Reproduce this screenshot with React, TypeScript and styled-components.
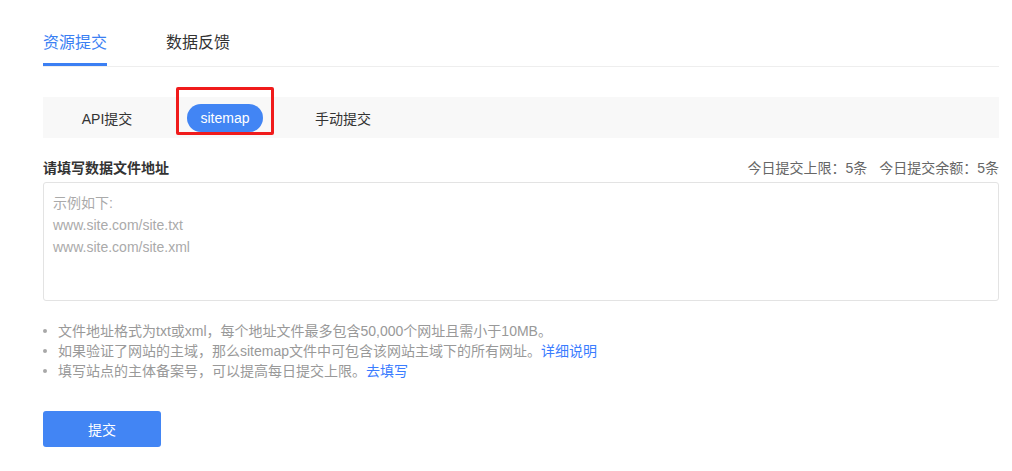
import React, { useState } from "react";
import styled, { createGlobalStyle } from "styled-components";

const GlobalStyle = createGlobalStyle`
  html, body {
    margin: 0;
    padding: 0;
    background: #fff;
    font-family: "Liberation Sans", "Noto Sans CJK SC", sans-serif;
    color: #333;
  }
  * { box-sizing: border-box; }
`;

const Page = styled.div`
  width: 956px;
  margin-left: 43px;
  padding-top: 28px;
`;

const TabRow = styled.div`
  display: flex;
  gap: 59px;
  border-bottom: 1px solid #eeeeee;
`;

const Tab = styled.div<{ $active?: boolean }>`
  height: 38px;
  padding-bottom: 5px;
  font-size: 16px;
  line-height: 30px;
  color: ${(p) => (p.$active ? "#3b7ff3" : "#333")};
  border-bottom: 3px solid ${(p) => (p.$active ? "#3b7ff3" : "transparent")};
  cursor: pointer;
`;

const SubBar = styled.div`
  margin-top: 30px;
  height: 41px;
  background: #f8f8f8;
  display: flex;
  align-items: center;
  gap: 42px;
  padding-left: 26px;
`;

const SubTab = styled.div<{ $active?: boolean }>`
  position: relative;
  min-width: 76px;
  height: 28px;
  padding: 0 10px;
  border-radius: 14px;
  display: flex;
  align-items: center;
  justify-content: center;
  font-size: 14px;
  color: ${(p) => (p.$active ? "#fff" : "#333")};
  background: ${(p) => (p.$active ? "#4285f4" : "transparent")};
  cursor: pointer;
`;

const Highlight = styled.span`
  position: absolute;
  left: -11px;
  right: -11px;
  top: -17px;
  bottom: -3px;
  border: 3px solid #f01b1b;
  border-radius: 2px;
  pointer-events: none;
`;

const LabelRow = styled.div`
  margin-top: 20px;
  margin-bottom: 4px;
  display: flex;
  justify-content: space-between;
  align-items: center;
  line-height: 20px;
`;

const Label = styled.div`
  font-size: 14px;
  font-weight: bold;
  color: #333;
`;

const Quota = styled.div`
  font-size: 14px;
  color: #666;
  display: flex;
  gap: 12px;
`;

const Input = styled.textarea`
  display: block;
  width: 100%;
  height: 119px;
  border: 1px solid #e3e3e3;
  border-radius: 3px;
  padding: 9px 9px;
  resize: none;
  font-family: "Liberation Sans", "Noto Sans CJK SC", sans-serif;
  font-size: 14px;
  line-height: 22px;
  color: #333;
  outline: none;
  &::placeholder {
    color: #aaa;
  }
`;

const Tips = styled.ul`
  margin: 20px 0 0;
  padding: 0;
  list-style: none;
  font-size: 14px;
  line-height: 20px;
  color: #999;
`;

const Tip = styled.li`
  position: relative;
  padding-left: 15px;
  &::before {
    content: "";
    position: absolute;
    left: 0;
    top: 8px;
    width: 4px;
    height: 4px;
    border-radius: 50%;
    background: #a8a8a8;
  }
`;

const Link = styled.a`
  color: #3a7cff;
  text-decoration: none;
  cursor: pointer;
`;

const SubmitButton = styled.button`
  margin-top: 30px;
  width: 118px;
  height: 36px;
  border: none;
  border-radius: 3px;
  background: #4285f4;
  color: #fff;
  font-family: "Liberation Sans", "Noto Sans CJK SC", sans-serif;
  font-size: 14px;
  cursor: pointer;
`;

const subTabs = ["API提交", "sitemap", "手动提交"];

export default function App() {
  const [tab, setTab] = useState(0);
  const [sub, setSub] = useState(1);
  return (
    <>
      <GlobalStyle />
      <Page>
        <TabRow>
          {["资源提交", "数据反馈"].map((t, i) => (
            <Tab key={t} $active={tab === i} onClick={() => setTab(i)}>
              {t}
            </Tab>
          ))}
        </TabRow>
        <SubBar>
          {subTabs.map((t, i) => (
            <SubTab key={t} $active={sub === i} onClick={() => setSub(i)}>
              {t}
              {i === 1 && <Highlight />}
            </SubTab>
          ))}
        </SubBar>
        <LabelRow>
          <Label>请填写数据文件地址</Label>
          <Quota>
            <span>今日提交上限：5条</span>
            <span>今日提交余额：5条</span>
          </Quota>
        </LabelRow>
        <Input placeholder={"示例如下:\nwww.site.com/site.txt\nwww.site.com/site.xml"} />
        <Tips>
          <Tip>文件地址格式为txt或xml，每个地址文件最多包含50,000个网址且需小于10MB。</Tip>
          <Tip>
            如果验证了网站的主域，那么sitemap文件中可包含该网站主域下的所有网址。<Link>详细说明</Link>
          </Tip>
          <Tip>
            填写站点的主体备案号，可以提高每日提交上限。<Link>去填写</Link>
          </Tip>
        </Tips>
        <SubmitButton>提交</SubmitButton>
      </Page>
    </>
  );
}
